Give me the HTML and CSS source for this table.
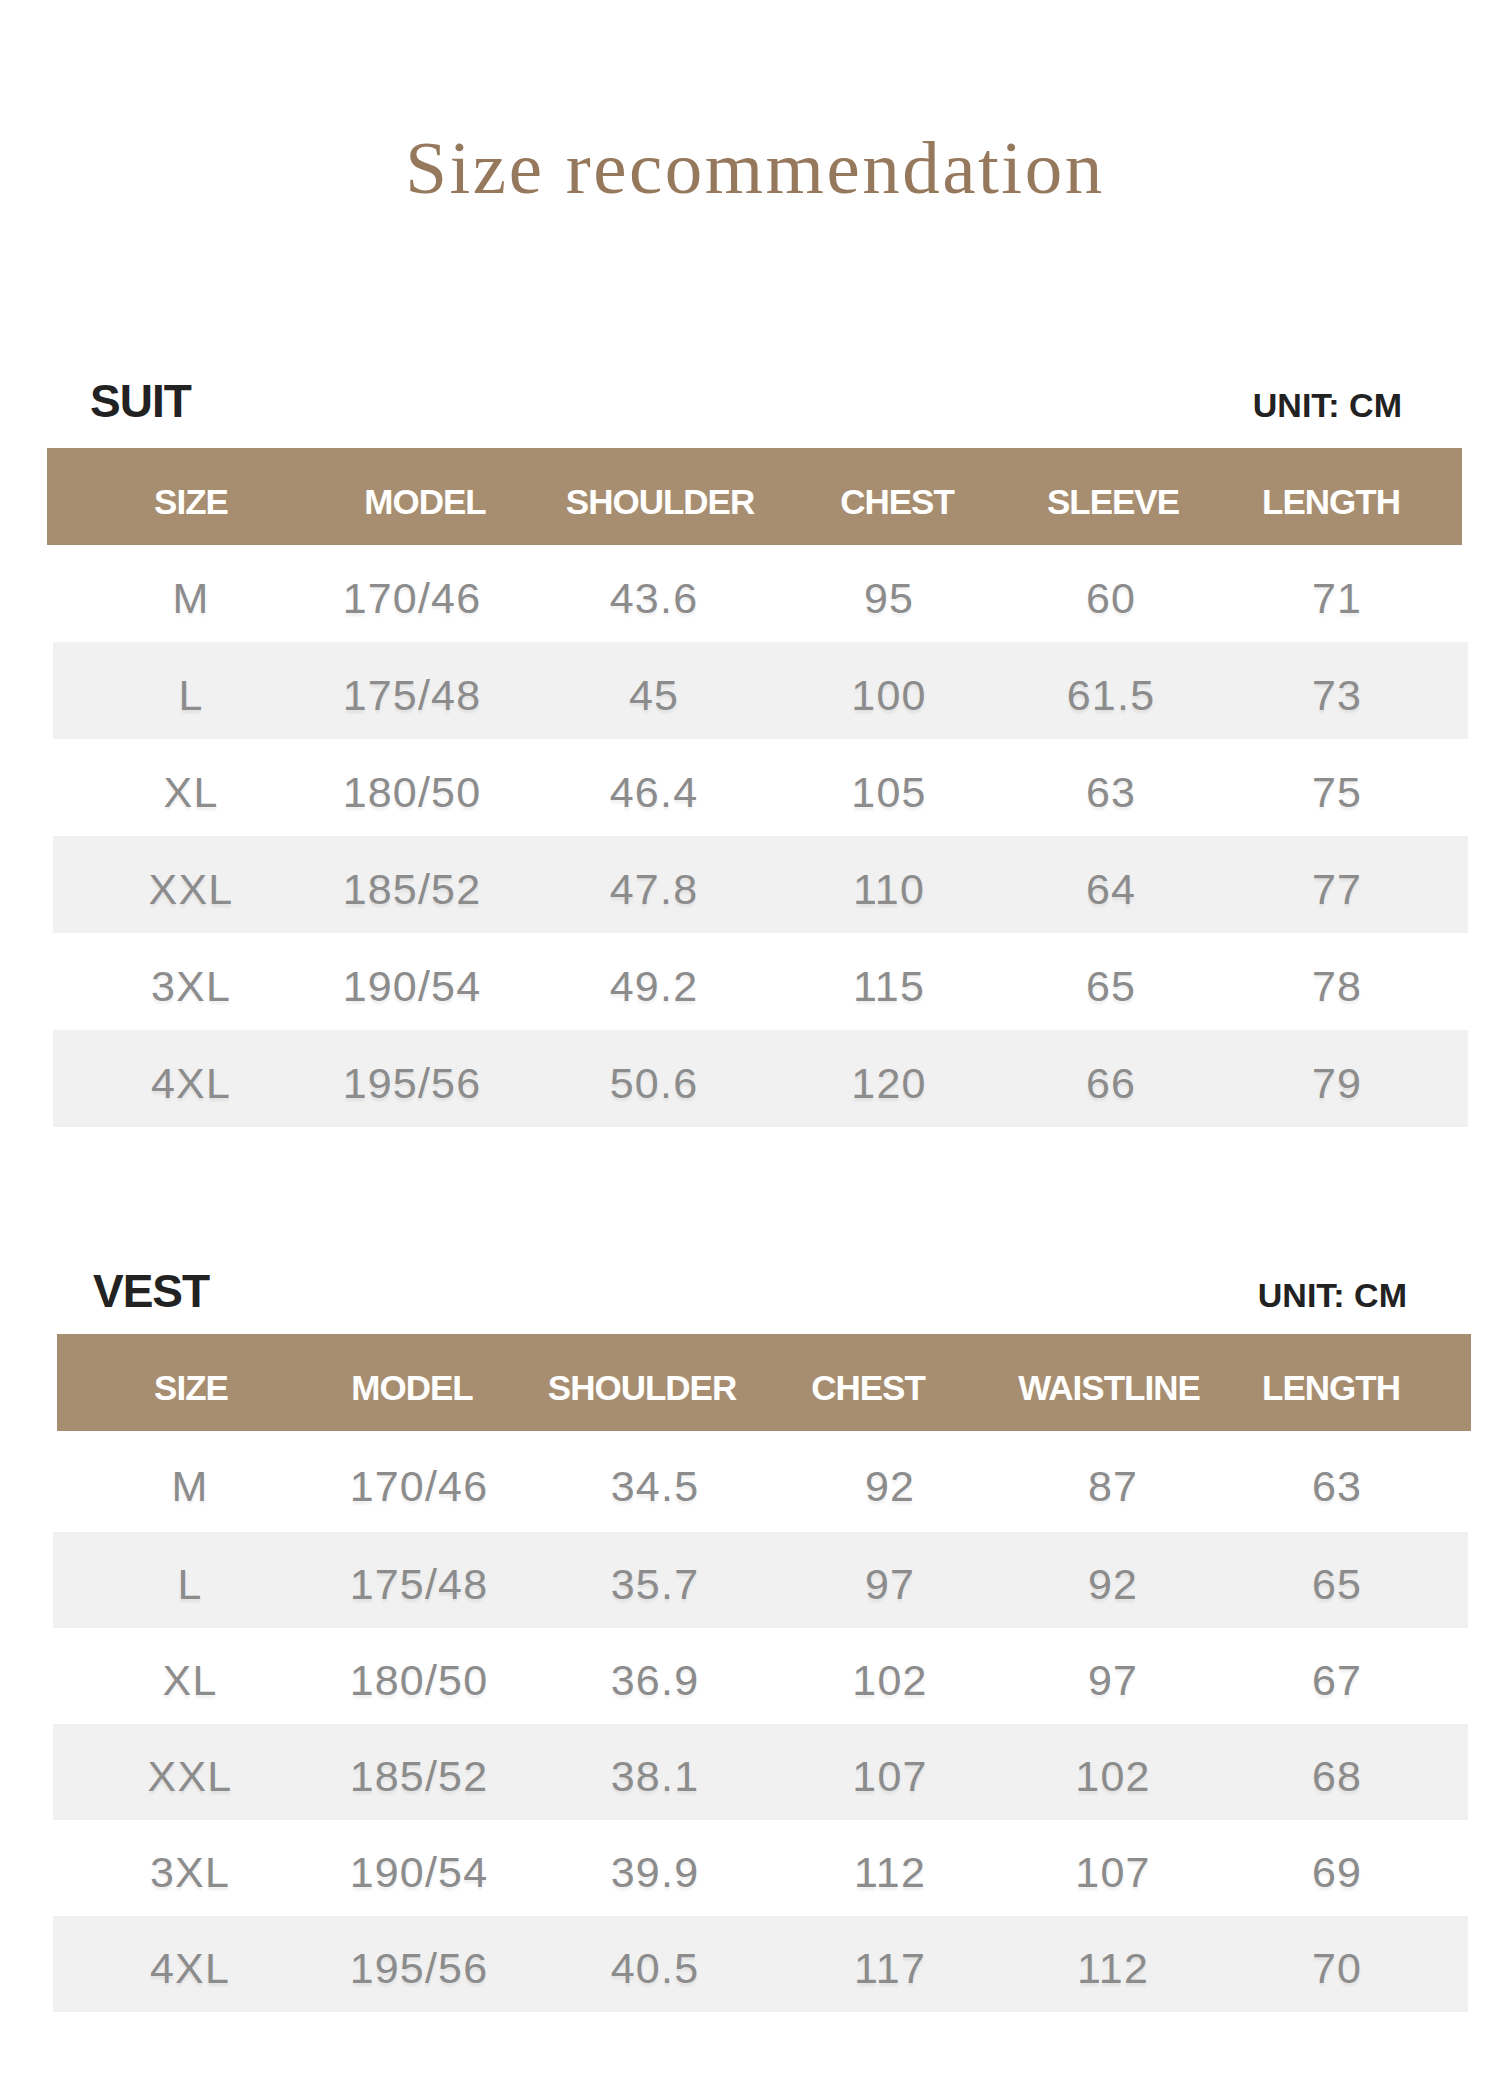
FILE: index.html
```html
<!DOCTYPE html>
<html lang="en">
<head>
<meta charset="utf-8">
<title>Size recommendation</title>
<link rel="stylesheet" href="styles.css">
</head>
<body>
<main class="page">
  <h1 class="title">Size recommendation</h1>

  <section class="chart chart-suit">
    <div class="chart-head">
      <h2 class="chart-name">SUIT</h2>
      <span class="unit">UNIT: CM</span>
    </div>
    <div class="table">
      <div class="row row-head">
        <span>SIZE</span><span>MODEL</span><span>SHOULDER</span><span>CHEST</span><span>SLEEVE</span><span>LENGTH</span>
      </div>
      <div class="row row-body"><span>M</span><span>170/46</span><span>43.6</span><span>95</span><span>60</span><span>71</span></div>
      <div class="row row-body"><span>L</span><span>175/48</span><span>45</span><span>100</span><span>61.5</span><span>73</span></div>
      <div class="row row-body"><span>XL</span><span>180/50</span><span>46.4</span><span>105</span><span>63</span><span>75</span></div>
      <div class="row row-body"><span>XXL</span><span>185/52</span><span>47.8</span><span>110</span><span>64</span><span>77</span></div>
      <div class="row row-body"><span>3XL</span><span>190/54</span><span>49.2</span><span>115</span><span>65</span><span>78</span></div>
      <div class="row row-body"><span>4XL</span><span>195/56</span><span>50.6</span><span>120</span><span>66</span><span>79</span></div>
    </div>
  </section>

  <section class="chart chart-vest">
    <div class="chart-head">
      <h2 class="chart-name">VEST</h2>
      <span class="unit">UNIT: CM</span>
    </div>
    <div class="table">
      <div class="row row-head">
        <span>SIZE</span><span>MODEL</span><span>SHOULDER</span><span>CHEST</span><span>WAISTLINE</span><span>LENGTH</span>
      </div>
      <div class="row row-body"><span>M</span><span>170/46</span><span>34.5</span><span>92</span><span>87</span><span>63</span></div>
      <div class="row row-body"><span>L</span><span>175/48</span><span>35.7</span><span>97</span><span>92</span><span>65</span></div>
      <div class="row row-body"><span>XL</span><span>180/50</span><span>36.9</span><span>102</span><span>97</span><span>67</span></div>
      <div class="row row-body"><span>XXL</span><span>185/52</span><span>38.1</span><span>107</span><span>102</span><span>68</span></div>
      <div class="row row-body"><span>3XL</span><span>190/54</span><span>39.9</span><span>112</span><span>107</span><span>69</span></div>
      <div class="row row-body"><span>4XL</span><span>195/56</span><span>40.5</span><span>117</span><span>112</span><span>70</span></div>
    </div>
  </section>
</main>
</body>
</html>
```

FILE: styles.css
```css
* {
  box-sizing: border-box;
}

html, body {
  margin: 0;
  padding: 0;
  background: #ffffff;
}

.page {
  width: 1500px;
  min-height: 2080px;
  display: flex;
  flex-direction: column;
  font-family: "Liberation Sans", Arial, sans-serif;
}

.title {
  margin: 130px 0 0 0;
  padding-left: 10px;
  height: 75px;
  font-family: "Liberation Serif", "Times New Roman", serif;
  font-weight: normal;
  font-size: 75px;
  line-height: 75px;
  letter-spacing: 2.5px;
  color: #96785c;
  text-align: center;
}

.chart {
  display: flex;
  flex-direction: column;
}

.chart-suit {
  margin-top: 173px;
}

.chart-vest {
  margin-top: 141px;
}

.chart-head {
  display: flex;
  justify-content: space-between;
  align-items: baseline;
  padding: 0 98px 0 90px;
}

.chart-vest .chart-head {
  padding-left: 93px;
  padding-right: 93px;
}

.chart-name {
  margin: 0;
  font-size: 46px;
  line-height: 46px;
  font-weight: bold;
  letter-spacing: -1px;
  color: #222222;
}

.unit {
  font-size: 34px;
  line-height: 34px;
  font-weight: bold;
  letter-spacing: 0;
  color: #222222;
}

.table {
  display: flex;
  flex-direction: column;
}

.chart-suit .table {
  margin-top: 24px;
}

.chart-vest .table {
  margin-top: 20px;
}

.row {
  display: grid;
  align-items: center;
  width: 1415px;
  white-space: nowrap;
  text-align: center;
}

.row-head {
  height: 97px;
  padding-top: 9px;
  background: #a88e70;
  color: #ffffff;
  font-size: 35px;
  line-height: 35px;
  font-weight: bold;
  letter-spacing: -1px;
}

.row-body {
  height: 97px;
  padding-top: 9px;
  margin-left: 53px;
  color: #8c8c8c;
  font-size: 43px;
  line-height: 43px;
  letter-spacing: 1.2px;
  text-shadow: 0 3px 3px rgba(0, 0, 0, 0.07);
}

.row-body:nth-child(odd) {
  background: #f1f1f1;
}

.chart-suit .row-head {
  margin-left: 47px;
  padding-left: 30px;
  grid-template-columns: 228px 240px 230px 244px 188px 248px;
}

.chart-suit .row-body {
  padding-left: 30px;
  grid-template-columns: 216px 226px 258px 212px 232px 220px;
}

.chart-vest .row-head {
  margin-left: 57px;
  width: 1414px;
  padding-left: 40px;
  grid-template-columns: 188px 254px 206px 246px 236px 208px;
}

.chart-vest .row-body {
  height: 96px;
  padding-left: 30px;
  grid-template-columns: 214px 244px 228px 242px 204px 244px;
}

.chart-vest .row-head + .row-body {
  height: 101px;
  padding-top: 10px;
}
```
